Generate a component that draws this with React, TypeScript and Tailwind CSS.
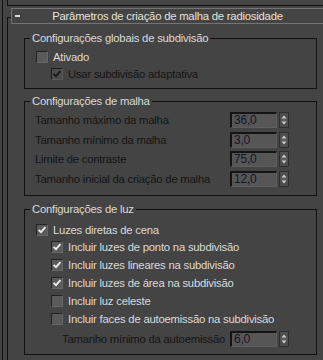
import React from "react";

function Check({ checked, disabled }: { checked?: boolean; disabled?: boolean }) {
  return (
    <span
      className={
        disabled
          ? "w-[12px] h-[12px] shrink-0 bg-[#4c4c4c] border border-t-[#1c1c1c] border-l-[#1c1c1c] border-r-[#5a5a5a] border-b-[#5a5a5a] flex items-center justify-center"
          : "w-[12px] h-[12px] shrink-0 bg-[#5a5a5a] border border-t-[#222222] border-l-[#222222] border-r-[#666666] border-b-[#666666] flex items-center justify-center"
      }
    >
      {checked && (
        <svg width="10" height="10" viewBox="0 0 10 10">
          <path
            d="M1.6 4.8 L4 7.2 L8.4 2.2"
            fill="none"
            stroke={disabled ? "#1a1a1a" : "#ececec"}
            strokeWidth="1.9"
          />
        </svg>
      )}
    </span>
  );
}

function CheckRow({
  label,
  checked,
  disabled,
  sub,
  h,
}: {
  label: string;
  checked?: boolean;
  disabled?: boolean;
  sub?: boolean;
  h: string;
}) {
  return (
    <div className={`flex items-center gap-[5px] ${sub ? "pl-[26px]" : "pl-[11px]"} ${h}`}>
      <Check checked={checked} disabled={disabled} />
      <span className={disabled ? "text-[#141414]" : "text-[#dadada]"}>{label}</span>
    </div>
  );
}

function Spinner({ value }: { value: string }) {
  return (
    <div className="flex items-center">
      <div className="w-[47px] h-[16px] bg-[#565656] border-t-2 border-l-2 border-r border-b border-t-[#141414] border-l-[#141414] border-r-[#5e5e5e] border-b-[#5e5e5e] pl-[2px] leading-[13px] text-[12px] text-[#161628]">
        {value}
      </div>
      <div className="ml-[2px] w-[10px] h-[16px] bg-[#4e4e4e] border border-[#2e2e2e]">
        <svg width="8" height="14" viewBox="0 0 8 14" className="block">
          <path d="M4 2.5 L6.5 5.5 L1.5 5.5 Z" fill="#cfcfcf" />
          <line x1="1" y1="7" x2="7" y2="7" stroke="#6a6a6a" strokeWidth="1" />
          <path d="M1.5 8.5 L6.5 8.5 L4 11.5 Z" fill="#cfcfcf" />
        </svg>
      </div>
    </div>
  );
}

function SpinRow({ label, value, mt }: { label: string; value: string; mt: string }) {
  return (
    <div className={`flex items-center pl-[10px] ${mt}`}>
      <span className="w-[195px] shrink-0 text-[#141414]">{label}</span>
      <Spinner value={value} />
    </div>
  );
}

function Group({
  title,
  className,
  children,
}: {
  title: string;
  className: string;
  children: React.ReactNode;
}) {
  return (
    <fieldset className={`ml-[16px] w-[293px] border border-[#111111] ${className}`}>
      <legend className="ml-[5px] px-[2px] leading-[14px] text-[#dadada]">{title}</legend>
      {children}
    </fieldset>
  );
}

export default function App() {
  return (
    <div className="w-[323px] h-[360px] bg-[#444444] flex overflow-hidden font-['Liberation_Sans',Arial,sans-serif] text-[11.3px] tracking-[-0.22px] leading-[14px]">
      <div className="w-[2px] shrink-0" />
      <div className="w-px shrink-0 bg-[#111111]" />
      <div className="flex-1 min-w-0 flex flex-col pl-[4px]">
        <div className="h-[6px] shrink-0 border-l border-b border-[#111111]" />
        <div className="mt-[11px] flex-1 border-l border-t border-[#111111] flex flex-col">
          <div className="-mt-[10px] ml-[3px] w-[313px] shrink-0 h-[16px] border border-[#747474] bg-[#444444] grid grid-cols-[20px_1fr_20px] items-center">
            <div className="ml-[3px] w-[5px] h-[2px] bg-[#d8d8d8]" />
            <div className="text-center text-[#e6e2d8] leading-[14px]">
              Parâmetros de criação de malha de radiosidade
            </div>
            <div />
          </div>

          <Group title="Configurações globais de subdivisão" className="mt-[7px] pt-[3px] pb-[6px]">
            <CheckRow label="Ativado" h="h-[17px]" />
            <CheckRow label="Usar subdivisão adaptativa" checked disabled sub h="h-[17px]" />
          </Group>

          <Group title="Configurações de malha" className="mt-[5px] pt-[4px] pb-[8px]">
            <SpinRow label="Tamanho máximo da malha" value="36,0" mt="" />
            <SpinRow label="Tamanho mínimo da malha" value="3,0" mt="mt-[4px]" />
            <SpinRow label="Limite de contraste" value="75,0" mt="mt-[3px]" />
            <SpinRow label="Tamanho inicial da criação de malha" value="12,0" mt="mt-[4px]" />
          </Group>

          <Group title="Configurações de luz" className="mt-[6px] pt-[5px] pb-[7px]">
            <CheckRow label="Luzes diretas de cena" checked h="h-[17px]" />
            <CheckRow label="Incluir luzes de ponto na subdivisão" checked sub h="h-[18px]" />
            <CheckRow label="Incluir luzes lineares na subdivisão" checked sub h="h-[18px]" />
            <CheckRow label="Incluir luzes de área na subdivisão" checked sub h="h-[18px]" />
            <CheckRow label="Incluir luz celeste" sub h="h-[18px]" />
            <CheckRow label="Incluir faces de autoemissão na subdivisão" sub h="h-[17px]" />
            <div className="flex items-center pl-[37px] mt-[4px]">
              <span className="w-[168px] shrink-0 text-[#141414]">Tamanho mínimo da autoemissão</span>
              <Spinner value="6,0" />
            </div>
          </Group>
        </div>
      </div>
    </div>
  );
}
